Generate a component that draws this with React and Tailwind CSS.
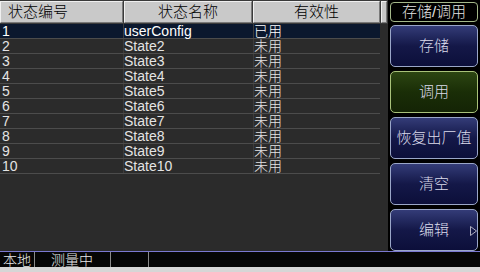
import React from 'react';

const rows = [
  ['1', 'userConfig', '已用'],
  ['2', 'State2', '未用'],
  ['3', 'State3', '未用'],
  ['4', 'State4', '未用'],
  ['5', 'State5', '未用'],
  ['6', 'State6', '未用'],
  ['7', 'State7', '未用'],
  ['8', 'State8', '未用'],
  ['9', 'State9', '未用'],
  ['10', 'State10', '未用'],
];

const font = { fontFamily: '"Liberation Sans", "Noto Sans CJK SC", sans-serif' };

const HeadCell = ({ className = '', children }) => (
  <div
    className={`h-[22px] bg-[#c9c9c9] border-t border-l border-t-[#efefef] border-l-[#efefef] border-b border-r border-b-[#7a7a7a] border-r-[#7a7a7a] text-black text-[15px] leading-[20px] font-light ${className}`}
  >
    {children}
  </div>
);

const SideButton = ({ label, green = false, arrow = false }) => (
  <div
    className={`relative h-[42px] rounded-[5px] border flex items-center justify-center text-[15px] font-light text-[#dcdcec] ${
      green
        ? 'border-[#a9c27a] bg-gradient-to-b from-[#2c4512] via-[#1a2e07] to-[#142405]'
        : 'border-[#9aa6c8] bg-gradient-to-b from-[#343c78] via-[#141848] to-[#0c0f3a]'
    }`}
  >
    {label}
    {arrow && (
      <svg className="absolute right-[0px] top-[16px]" width="7" height="10" viewBox="0 0 7 10">
        <path d="M0.5 0.5 L6.5 5 L0.5 9.5 Z" fill="none" stroke="#b0b0c0" strokeWidth="1" />
      </svg>
    )}
  </div>
);

export default function App() {
  return (
    <div className="w-[480px] h-[272px] bg-black overflow-hidden flex flex-col" style={font}>
      <div className="flex h-[251px]">
        {/* table */}
        <div className="w-[388px] h-full bg-[#2b2b2b] flex flex-col">
          <div className="flex gap-[1px] pt-[1px] h-[24px] bg-[#3a3a3a]">
            <HeadCell className="w-[123px] pl-[7px]">状态编号</HeadCell>
            <HeadCell className="w-[128px] text-center">状态名称</HeadCell>
            <HeadCell className="w-[127px] text-center">有效性</HeadCell>
            <HeadCell className="w-[6px]" />
          </div>
          <div className="w-[380px]">
            {rows.map((r, i) => (
              <div
                key={r[0]}
                className={`flex h-[15px] border-b border-[#4c4c4c] text-[14px] leading-[14px] font-light ${
                  i === 0 ? 'bg-[#0b182e] text-white' : 'text-[#e4e4e4]'
                }`}
              >
                <div className="w-[124px] pl-[2px] border-r border-[#3c3c3c]">{r[0]}</div>
                <div className="w-[130px] border-r border-[#3c3c3c]">{r[1]}</div>
                <div className="flex-1">{r[2]}</div>
              </div>
            ))}
          </div>
        </div>
        {/* side panel */}
        <div className="w-[92px] pl-[2px] pr-[2px] pt-[2px] flex flex-col gap-[4px]">
          <div className="h-[20px] mb-[-1px] rounded-[4px] border border-[#a4b88a] text-[#e4e4e4] text-[15px] leading-[18px] font-light text-center">
            存储/调用
          </div>
          <SideButton label="存储" />
          <SideButton label="调用" green />
          <SideButton label="恢复出厂值" />
          <SideButton label="清空" />
          <SideButton label="编辑" arrow />
        </div>
      </div>
      {/* status bar */}
      <div className="h-[16px] border-t border-[#7a78d0] bg-[#050505] flex text-[14px] leading-[16px] font-light text-[#e8e8e8] overflow-hidden">
        <div className="w-[35px] pl-[3px] border-r border-[#8a8a8a]">本地</div>
        <div className="w-[76px] pl-[16px] border-r border-[#8a8a8a]">测量中</div>
        <div className="w-[38px] border-r border-[#8a8a8a]" />
      </div>
      <div className="flex-1 bg-[#d6d6d6]" />
    </div>
  );
}
